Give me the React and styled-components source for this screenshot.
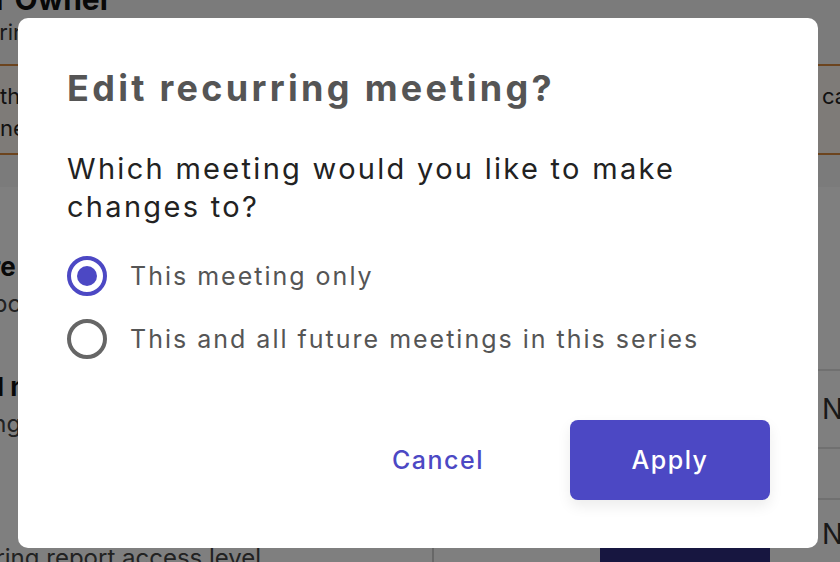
import React, { useState } from "react";
import styled, { createGlobalStyle } from "styled-components";

const GlobalStyle = createGlobalStyle`
  html, body {
    margin: 0;
    padding: 0;
  }
  body {
    font-family: "Inter", "Liberation Sans", sans-serif;
    background: #fff;
    overflow: hidden;
  }
  * {
    box-sizing: border-box;
  }
`;

const Page = styled.div`
  position: relative;
  width: 840px;
  height: 562px;
  overflow: hidden;
  background: #fff;
  color: #222;
`;

const Content = styled.div`
  width: 1100px;
  margin-left: -58px;
`;

const Header = styled.header`
  height: 187px;
  background: #f7f7f7;
  padding-top: 1px;
`;

const PageTitle = styled.h1`
  margin: -20px 0 0 -59px;
  font-size: 30px;
  font-weight: 700;
  line-height: 36px;
  color: #111;
`;

const PageSub = styled.p`
  margin: 0 0 0 -30px;
  font-size: 22px;
  line-height: 30px;
  color: #333;
`;

const Banner = styled.div`
  margin-top: 17px;
  height: 91px;
  display: flex;
  align-items: flex-start;
  padding: 14px 0 0 58px;
  background: #fdf6f1;
  border-top: 2px solid #d9893d;
  border-bottom: 2px solid #d9893d;
  font-size: 22px;
  line-height: 32px;
  color: #222;
`;

const BannerMessage = styled.div`
  width: 822px;
  flex: none;
  white-space: nowrap;
  overflow: hidden;
`;

const BannerAction = styled.span`
  white-space: nowrap;
`;

const Settings = styled.div`
  display: flex;
  flex-direction: column;
  padding-top: 62px;
`;

const SettingRow = styled.div`
  display: grid;
  grid-template-columns: 490px 386px 1fr;
  height: ${(p) => p.$height}px;
`;

const SettingInfo = styled.div`
  padding-top: ${(p) => p.$top || 0}px;
`;

const SettingTitle = styled.h3`
  margin: 0;
  font-size: 26px;
  font-weight: 700;
  line-height: 36px;
  color: #111;
`;

const SettingDesc = styled.p`
  margin: 4px 0 0 -13px;
  font-size: 24px;
  line-height: 30px;
  color: #444;
  white-space: nowrap;
`;

const ValueColumn = styled.div`
  display: flex;
  flex-direction: column;
`;

const ValueCell = styled.div`
  display: flex;
  align-items: center;
  height: ${(p) => p.$height}px;
  padding-left: 4px;
  border-top: 2px solid #e0e0e0;
  font-size: 28px;
  color: #333;
`;

const Controls = styled.div`
  display: flex;
  align-items: flex-start;
  padding-top: 22px;
`;

const SelectBox = styled.div`
  width: 168px;
  height: 60px;
  border-left: 2px solid #cfcfcf;
`;

const DarkButton = styled.div`
  width: 170px;
  height: 60px;
  border-radius: 6px;
  background: #2f2c80;
`;

const Overlay = styled.div`
  position: absolute;
  inset: 0;
  background: rgba(0, 0, 0, 0.5);
  display: flex;
  align-items: flex-start;
  padding: 18px;
`;

const Dialog = styled.div`
  width: 800px;
  height: 530px;
  background: #fff;
  border-radius: 10px;
  padding: 50px 48px 48px 49px;
  display: flex;
  flex-direction: column;
`;

const DialogTitle = styled.h2`
  margin: 0;
  font-size: 36px;
  line-height: 41px;
  font-weight: 700;
  color: #555;
  letter-spacing: 3.3px;
`;

const Question = styled.p`
  margin: 41px 0 0;
  font-size: 29px;
  line-height: 38px;
  font-weight: 400;
  color: #222;
  letter-spacing: 2.3px;
`;

const OptionList = styled.div`
  display: flex;
  flex-direction: column;
  gap: 23px;
  margin-top: 30px;
`;

const Option = styled.label`
  display: flex;
  align-items: center;
  gap: 23px;
  height: 40px;
  cursor: pointer;
  font-size: 25px;
  color: #555;
  letter-spacing: 2px;
`;

const Radio = styled.span`
  width: 40px;
  height: 40px;
  flex: none;
  border-radius: 50%;
  border: 4px solid ${(p) => (p.$checked ? "#4c48c4" : "#666")};
  display: flex;
  align-items: center;
  justify-content: center;

  &::after {
    content: "";
    width: 20px;
    height: 20px;
    border-radius: 50%;
    background: ${(p) => (p.$checked ? "#4c48c4" : "transparent")};
  }
`;

const Footer = styled.div`
  margin-top: auto;
  display: flex;
  justify-content: flex-end;
  gap: 32px;
`;

const Button = styled.button`
  width: 200px;
  height: 80px;
  border: none;
  border-radius: 8px;
  font-family: inherit;
  font-size: 25px;
  font-weight: 500;
  letter-spacing: 1.5px;
  cursor: pointer;
  background: ${(p) => (p.$primary ? "#4c48c4" : "transparent")};
  color: ${(p) => (p.$primary ? "#fff" : "#4c48c4")};
  box-shadow: ${(p) => (p.$primary ? "0 6px 14px rgba(0, 0, 0, 0.08)" : "none")};
`;

const options = [
  { id: "one", label: "This meeting only" },
  { id: "all", label: "This and all future meetings in this series" },
];

export default function App() {
  const [choice, setChoice] = useState("one");

  return (
    <Page>
      <GlobalStyle />
      <Content>
        <Header>
          <PageTitle>Transfer Owner</PageTitle>
          <PageSub>Transferring ownership of this meeting</PageSub>
          <Banner>
            <BannerMessage>
              the new owner will be able to edit and cancel the meeting
              <br />
              next occurrence onwards
            </BannerMessage>
            <BannerAction>cancel transfer</BannerAction>
          </Banner>
        </Header>
        <Settings>
          <SettingRow $height={120}>
            <SettingInfo>
              <SettingTitle>Share recap</SettingTitle>
              <SettingDesc>Auto-post recap</SettingDesc>
            </SettingInfo>
          </SettingRow>
          <SettingRow $height={129}>
            <SettingInfo>
              <SettingTitle>Meal notes</SettingTitle>
              <SettingDesc>Meeting notes access</SettingDesc>
            </SettingInfo>
            <div />
            <ValueColumn>
              <ValueCell $height={78}>No</ValueCell>
              <ValueCell $height={51} />
            </ValueColumn>
          </SettingRow>
          <SettingRow $height={120}>
            <SettingInfo $top={5}>
              <SettingTitle>Data</SettingTitle>
              <SettingDesc>Recurring report access level</SettingDesc>
            </SettingInfo>
            <Controls>
              <SelectBox />
              <DarkButton />
            </Controls>
            <ValueColumn>
              <ValueCell $height={70}>No</ValueCell>
            </ValueColumn>
          </SettingRow>
        </Settings>
      </Content>

      <Overlay>
        <Dialog role="dialog" aria-modal="true">
          <DialogTitle>Edit recurring meeting?</DialogTitle>
          <Question>Which meeting would you like to make changes to?</Question>
          <OptionList>
            {options.map((o) => (
              <Option key={o.id} onClick={() => setChoice(o.id)}>
                <Radio $checked={choice === o.id} />
                {o.label}
              </Option>
            ))}
          </OptionList>
          <Footer>
            <Button>Cancel</Button>
            <Button $primary>Apply</Button>
          </Footer>
        </Dialog>
      </Overlay>
    </Page>
  );
}
